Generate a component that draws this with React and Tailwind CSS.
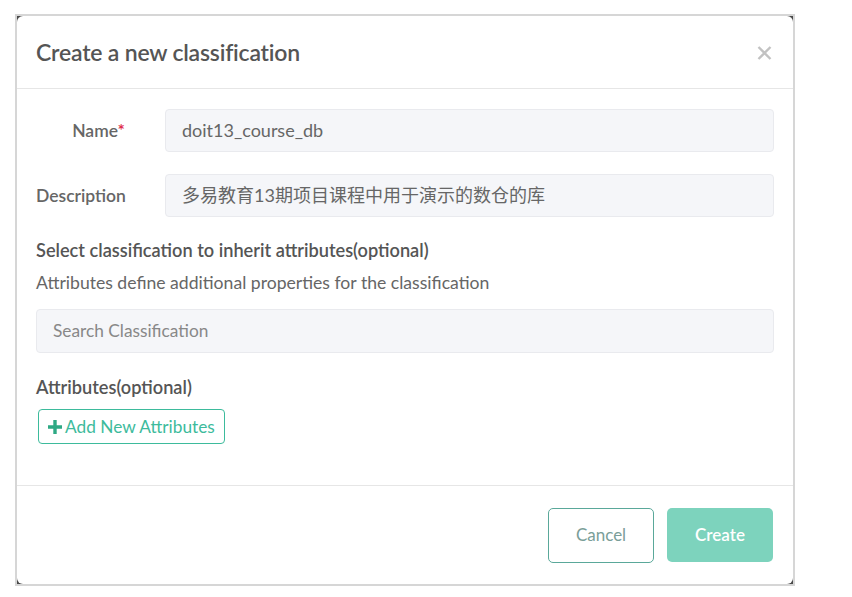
import React from "react";

const font = { fontFamily: '"Lato", "Noto Sans CJK SC", sans-serif' };

export default function App() {
  return (
    <div className="w-[852px] h-[597px] bg-white overflow-hidden" style={font}>
      <div className="ml-[15px] mt-[14px] w-[780px] h-[572px] border-2 border-[#d6d6d6] bg-[#4a4a4a]">
        <div className="w-full h-full bg-white rounded-[6px] flex flex-col">
          {/* header */}
          <div className="h-[73px] flex items-center justify-between pl-[19px] pr-[20px] border-b border-[#e6e6e6] shrink-0">
            <h4 className="text-[23px] font-semibold text-[#555] tracking-[-0.2px]">Create a new classification</h4>
            <svg width="15" height="14" viewBox="0 0 15 14" className="mr-[1px] mt-[1px]">
              <path d="M1.5 1L13.5 13M13.5 1L1.5 13" stroke="#c2c2c2" strokeWidth="2.4" />
            </svg>
          </div>
          {/* body */}
          <div className="flex-1 pl-[19px] pr-[19px] pt-[20px]">
            <div className="flex items-center">
              <label className="w-[90px] text-right pr-[1px] text-[17.5px] font-semibold text-[#666] leading-[22px] whitespace-nowrap">
                Name<span className="text-[#e0314e]">*</span>
              </label>
              <div className="ml-[39px] flex-1 h-[43px] rounded-[4px] bg-[#f5f6f9] border border-[#e9eaee] flex items-center pl-[16px] text-[18px] text-[#666]">
                doit13_course_db
              </div>
            </div>
            <div className="flex items-center mt-[22px]">
              <label className="w-[90px] text-right pr-[1px] text-[17.5px] font-semibold text-[#666] leading-[22px] whitespace-nowrap">
                Description
              </label>
              <div className="ml-[39px] flex-1 h-[43px] rounded-[4px] bg-[#f5f6f9] border border-[#e9eaee] flex items-center pl-[16px] text-[18px] text-[#666]">
                多易教育13期项目课程中用于演示的数仓的库
              </div>
            </div>
            <div className="mt-[23px] text-[18.2px] font-semibold text-[#555] leading-[20px] whitespace-nowrap">
              Select classification to inherit attributes(optional)
            </div>
            <div className="mt-[13px] text-[17.6px] text-[#666] leading-[20px] whitespace-nowrap">
              Attributes define additional properties for the classification
            </div>
            <div className="mt-[16px] h-[44px] rounded-[4px] bg-[#f5f6f9] border border-[#e9eaee] flex items-center pl-[16px] text-[17.3px] text-[#888]">
              Search Classification
            </div>
            <div className="mt-[24px] text-[18.2px] font-semibold text-[#555] leading-[20px]">
              Attributes(optional)
            </div>
            <button className="mt-[12px] ml-[2px] h-[35px] pl-[9px] pr-[9px] rounded-[4px] border border-[#3dbb9c] text-[#3dbb9c] text-[17.3px] flex items-center gap-[3px]">
              <svg width="14" height="14" viewBox="0 0 14 14">
                <path d="M5.3 0h3.4v5.3H14v3.4H8.7V14H5.3V8.7H0V5.3h5.3z" fill="#2ea984" />
              </svg>
              Add New Attributes
            </button>
          </div>
          {/* footer */}
          <div className="h-[99px] border-t border-[#e6e6e6] flex items-center justify-end pr-[20px] gap-[13px] shrink-0">
            <button className="w-[106px] h-[55px] rounded-[5px] border border-[#5aa89a] text-[#7a9e98] text-[17px] bg-white">
              Cancel
            </button>
            <button className="w-[106px] h-[54px] rounded-[5px] bg-[#7dd3bd] text-white text-[17px] font-semibold">
              Create
            </button>
          </div>
        </div>
      </div>
    </div>
  );
}
